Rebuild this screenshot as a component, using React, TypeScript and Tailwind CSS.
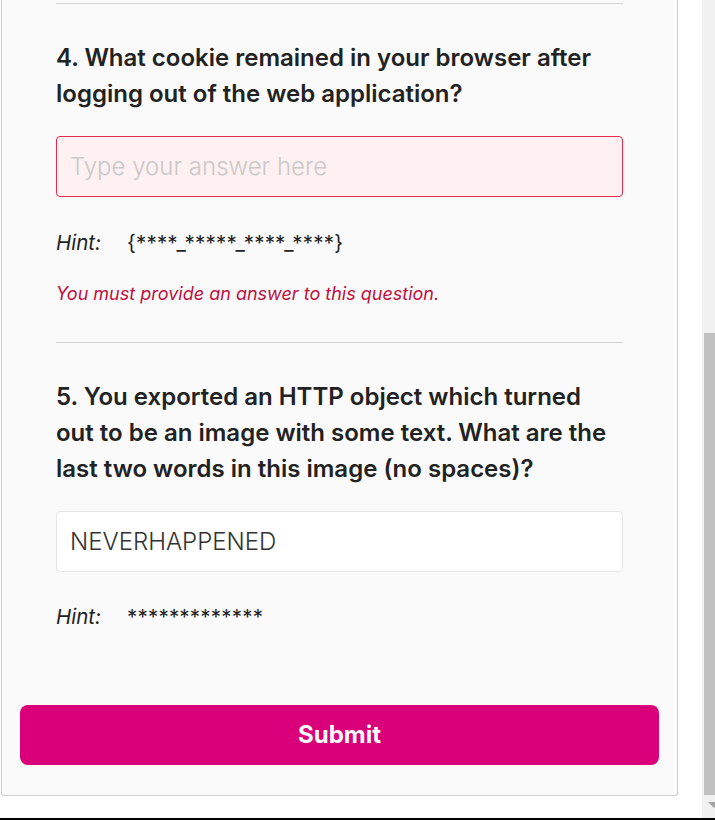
function Divider() {
  return <div className="h-px bg-[#d4d4d4]" />;
}

function Hint({ value }: { value: string }) {
  return (
    <div className="flex items-center h-[28px] text-[#222]">
      <span className="w-[71px] italic text-[20.5px]">Hint:</span>
      <span className="text-[20.5px] tracking-[0.2px]">{value}</span>
    </div>
  );
}

export default function App() {
  return (
    <div className="w-[715px] h-[820px] overflow-hidden bg-white flex flex-col font-['Inter','Liberation_Sans',sans-serif]">
      <div className="flex flex-1 min-h-0">
        <div className="flex-1">
          <div className="ml-px w-[677px] h-[796px] bg-[#fafafa] border border-t-0 border-[#cfcfcf] rounded-b-[3px] flex flex-col">
            <div className="px-[54px] pt-[3px]">
              <Divider />
              <h2 className="mt-[36px] text-[24px] leading-[36px] font-semibold text-[#222]">
                4. What cookie remained in your browser after logging out of the web application?
              </h2>
              <input
                className="mt-[24px] w-full h-[61px] px-[13px] rounded-[4px] border border-[#e8294f] bg-[#fff0f1] text-[24px] font-light text-[#333] placeholder:text-[#c9c9c9] outline-none"
                placeholder="Type your answer here"
              />
              <div className="mt-[32px]">
                <Hint value="{****_*****_****_****}" />
              </div>
              <p className="mt-[25px] h-[24px] leading-[24px] text-[18px] italic text-[#c0103f]">
                You must provide an answer to this question.
              </p>
              <div className="mt-[36px]">
                <Divider />
              </div>
              <h2 className="mt-[36px] text-[24px] leading-[36px] font-semibold text-[#222]">
                5. You exported an HTTP object which turned out to be an image with some text. What are the last two words in this image (no spaces)?
              </h2>
              <input
                className="mt-[24px] w-full h-[61px] px-[13px] rounded-[4px] border border-[#e6e6e6] bg-white text-[24px] font-light text-[#333] outline-none"
                defaultValue="NEVERHAPPENED"
              />
              <div className="mt-[31px]">
                <Hint value="*************" />
              </div>
            </div>
            <div className="px-[18px] mt-[74px]">
              <button className="w-full h-[60px] rounded-[8px] bg-[#d9007a] text-white text-[24px] font-bold">
                Submit
              </button>
            </div>
          </div>
        </div>
        <div className="w-[13px] bg-[#f1f1f1] flex flex-col">
          <div className="h-[333px]" />
          <div className="ml-[2px] h-[462px] bg-[#c1c1c1]" />
          <div className="flex-1 flex justify-end pt-[7px]">
            <div className="w-0 h-0 border-l-[6px] border-r-[6px] border-t-[6px] border-l-transparent border-r-transparent border-t-[#a3a3a3] mr-[-5px]" />
          </div>
        </div>
      </div>
      <div className="h-[2px] bg-black" />
    </div>
  );
}
